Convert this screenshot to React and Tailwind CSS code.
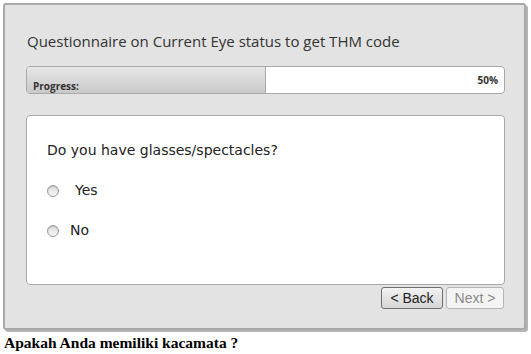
import React from "react";

function Radio() {
    return (
        <span className="inline-block w-[12px] h-[12px] rounded-full border border-[#9a9a9a] bg-gradient-to-b from-[#dcdcdc] to-[#f7f7f7] shadow-[inset_0_1px_1px_rgba(0,0,0,0.15)]"></span>
    );
}

export default function App() {
    return (
        <div className="w-[531px] h-[354px] bg-white overflow-hidden">
            <div className="ml-[3px] mt-[3px] w-[523px] h-[327px] bg-[#e2e3e2] border-2 border-[#a9a9a9] rounded-[3px] shadow-[2px_2px_0_#b5b5b5] pl-[21px] pr-[19px] pt-[24px] flex flex-col">
                <h1 className="text-[15px] leading-[24px] text-[#333] font-['Open_Sans',sans-serif] ml-[1px]">
                    Questionnaire on Current Eye status to get THM code
                </h1>

                {/* progress bar */}
                <div className="mt-[13px] h-[28px] flex border border-[#a9a9a9] rounded-[4px] overflow-hidden bg-white">
                    <div className="w-1/2 bg-gradient-to-b from-[#e6e6e6] to-[#c9c9c9] border-r border-[#a9a9a9] flex items-end px-[6px] pb-[1px]">
                        <span className="text-[10px] font-bold text-[#333] font-['Open_Sans',sans-serif] leading-[11px]">Progress:</span>
                    </div>
                    <div className="flex-1 flex items-center justify-end pr-[6px]">
                        <span className="text-[10px] font-bold text-[#333] font-['Open_Sans',sans-serif]">50%</span>
                    </div>
                </div>

                {/* question card */}
                <div className="mt-[21px] h-[170px] bg-white border border-[#a9a9a9] rounded-[4px] px-[20px] pt-[25px] font-['DejaVu_Sans',sans-serif] text-[#222]">
                    <p className="text-[14px] leading-[18px]">Do you have glasses/spectacles?</p>
                    <div className="mt-[21px] flex items-center gap-[16px]">
                        <Radio />
                        <span className="text-[14px]">Yes</span>
                    </div>
                    <div className="mt-[19px] flex items-center gap-[11px]">
                        <Radio />
                        <span className="text-[14px]">No</span>
                    </div>
                </div>

                <div className="mt-[2px] flex justify-end gap-[3px] pr-[1px] font-['Liberation_Sans',sans-serif] text-[14px]">
                    <button className="w-[62px] h-[22px] border border-[#707070] rounded-[3px] bg-gradient-to-b from-[#f2f2f2] to-[#d6d6d6] text-[#222] leading-none">&lt; Back</button>
                    <button className="w-[58px] h-[22px] border border-[#b5b5b5] rounded-[3px] bg-[#f4f4f4] text-[#8a8a8a] leading-none" disabled>Next &gt;</button>
                </div>
            </div>
            <p className="mt-[3px] ml-[4px] font-['Liberation_Serif',serif] font-bold text-[15.5px] leading-[19px] text-black">Apakah Anda memiliki kacamata ?</p>
        </div>
    );
}
